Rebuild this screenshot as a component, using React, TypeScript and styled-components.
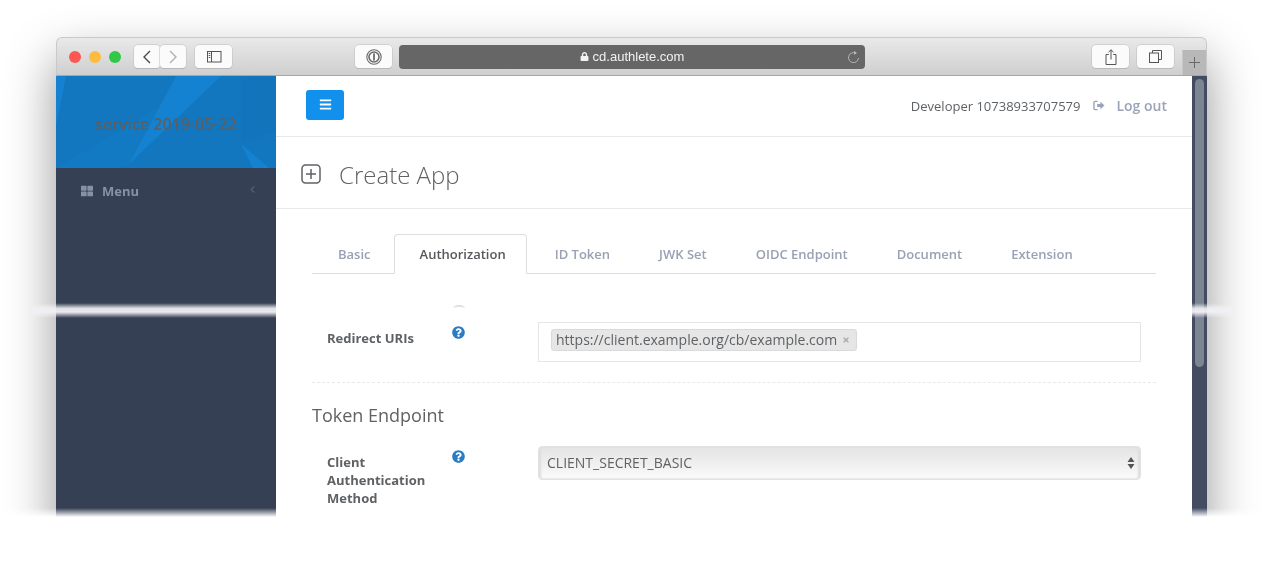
import React from "react";
import styled, { createGlobalStyle } from "styled-components";
import { FaBars, FaQuestionCircle, FaThLarge, FaTimes, FaLock } from "react-icons/fa";
import { ChevronLeft } from "lucide-react";

const GlobalStyle = createGlobalStyle`
  html, body {
    margin: 0;
    padding: 0;
    background: #ffffff;
    overflow: hidden;
  }
  * {
    box-sizing: border-box;
  }
`;

const TABS = ["Basic", "Authorization", "ID Token", "JWK Set", "OIDC Endpoint", "Document", "Extension"];

function BackIcon() {
  return (
    <svg width="10" height="14" viewBox="0 0 10 14" fill="none" stroke="#4a4a4a" strokeWidth="1.4">
      <path d="M8 1L2 7l6 6" />
    </svg>
  );
}

function ForwardIcon() {
  return (
    <svg width="10" height="14" viewBox="0 0 10 14" fill="none" stroke="#b0b0b0" strokeWidth="1.4">
      <path d="M2 1l6 6-6 6" />
    </svg>
  );
}

function SidebarIcon() {
  return (
    <svg width="16" height="12" viewBox="0 0 16 12" fill="none" stroke="#555" strokeWidth="1">
      <rect x="1.5" y="0.5" width="13.5" height="10.5" />
      <path d="M5.5 0.5v10.5" />
      <path d="M2.7 2.5h1.6M2.7 4.5h1.6M2.7 6.5h1.6" />
    </svg>
  );
}

function PasswordIcon() {
  return (
    <svg width="16" height="16" viewBox="0 0 16 16" fill="none">
      <circle cx="8" cy="8" r="7.2" stroke="#6a6a6a" strokeWidth="1.1" />
      <circle cx="8" cy="8" r="5" stroke="#6a6a6a" strokeWidth="1.6" />
      <rect x="7.2" y="4.4" width="1.6" height="7.2" fill="#5a5a5a" />
    </svg>
  );
}

function ReloadIcon() {
  return (
    <svg width="13" height="14" viewBox="0 0 13 14" fill="none" stroke="#b5b5b5" strokeWidth="1">
      <path d="M8.6 3.1A5 5 0 1 0 11.5 8" />
      <path d="M7 0.7l3 2.2-3 2.2z" fill="#b5b5b5" stroke="none" />
    </svg>
  );
}

function ShareIcon() {
  return (
    <svg width="12" height="16" viewBox="0 0 12 16" fill="none" stroke="#555" strokeWidth="1">
      <path d="M3.8 5.5H1v10h10v-10H8.2" />
      <path d="M6 10.5V0.8M3.5 3.2L6 0.8l2.500 2.400" />
    </svg>
  );
}

function TabsIcon() {
  return (
    <svg width="13" height="13" viewBox="0 0 13 13" fill="none" stroke="#555" strokeWidth="1">
      <rect x="0.5" y="3" width="9" height="9.5" />
      <path d="M3.5 3V0.5h9v9H9.5" />
    </svg>
  );
}

function PlusIcon() {
  return (
    <svg width="11" height="11" viewBox="0 0 11 11" fill="none" stroke="#6a6a6a" strokeWidth="1">
      <path d="M5.500 0v11M0 5.500h11" />
    </svg>
  );
}

function LogoutIcon() {
  return (
    <svg width="12" height="11" viewBox="0 0 13 11">
      <path d="M5 1H2.200C1.400 1 1 1.500 1 2.200v6.600C1 9.500 1.400 10 2.200 10H5" fill="none" stroke="#9aa3b8" strokeWidth="1.500" />
      <path d="M4.500 3.800h3.500V1.500l4.500 4-4.500 4V7.200H4.500z" fill="#9aa3b8" />
    </svg>
  );
}

function PlusSquareIcon() {
  return (
    <svg width="20" height="20" viewBox="0 0 20 20" fill="none" stroke="#5f6265" strokeWidth="1.500">
      <rect x="1" y="1" width="18" height="18" rx="3.500" />
      <path d="M10 5v10M5 10h10" />
    </svg>
  );
}

function HeaderArt() {
  return (
    <HeaderArtSvg viewBox="0 0 220 92" preserveAspectRatio="none">
      <polygon points="0,92 105,30 165,0 73,88 62,92" fill="#127ac2" />
      <polygon points="120,0 165,0 73,88" fill="#1482d0" />
      <polygon points="0,0 10,0 0,50" fill="#1482d0" />
      <polygon points="185,68 213,92 197,92" fill="#1482d0" />
      <polygon points="185,0 220,0 220,55 185,68" fill="#1275bb" />
    </HeaderArtSvg>
  );
}

export default function App() {
  return (
    <Page>
      <GlobalStyle />
      <BrowserWindow>
        <TitleBar>
          <Lights>
            <Light $color="#fc5753" />
            <Light $color="#fdbc40" />
            <Light $color="#33c748" />
          </Lights>
          <NavGroup>
            <NavButton><BackIcon /></NavButton>
            <NavButton><ForwardIcon /></NavButton>
          </NavGroup>
          <ToolButton $gap={9}><SidebarIcon /></ToolButton>
          <ToolButton $gap={123}><PasswordIcon /></ToolButton>
          <UrlBar>
            <UrlText><FaLock size={9} />cd.authlete.com</UrlText>
            <ReloadSlot><ReloadIcon /></ReloadSlot>
          </UrlBar>
          <ToolButton $gap={227}><ShareIcon /></ToolButton>
          <ToolButton $gap={8}><TabsIcon /></ToolButton>
          <NewTab><PlusIcon /></NewTab>
        </TitleBar>
        <Body>
          <Sidebar>
            <SidebarHeader>
              <HeaderArt />
              <ServiceName>service 2019-05-22</ServiceName>
            </SidebarHeader>
            <MenuItem>
              <FaThLarge size={12} />
              <MenuLabel>Menu</MenuLabel>
              <MenuCaret><ChevronLeft size={11} strokeWidth={1.5} /></MenuCaret>
            </MenuItem>
          </Sidebar>
          <Main>
            <TopBar>
              <MenuButton><FaBars size={13} /></MenuButton>
              <UserName>Developer 10738933707579</UserName>
              <LogoutLink><LogoutIcon />Log out</LogoutLink>
            </TopBar>
            <PageHeading>
              <PlusSquareIcon />
              <PageTitle>Create App</PageTitle>
            </PageHeading>
            <Content>
              <TabList>
                {TABS.map((tab) => (
                  <Tab key={tab} $active={tab === "Authorization"}>{tab}</Tab>
                ))}
              </TabList>
              <Spinner />
              <FormRow $top={11}>
                <FieldLabel>Redirect URIs</FieldLabel>
                <HelpSlot><FaQuestionCircle size={13} /></HelpSlot>
                <TagInput>
                  <TagChip>
                    https://client.example.org/cb/example.com
                    <TagRemove><FaTimes size={8} /></TagRemove>
                  </TagChip>
                </TagInput>
              </FormRow>
              <DashedRule />
              <SectionTitle>Token Endpoint</SectionTitle>
              <FormRow $top={19}>
                <FieldLabel>Client Authentication Method</FieldLabel>
                <HelpSlot><FaQuestionCircle size={13} /></HelpSlot>
                <SelectBox>
                  CLIENT_SECRET_BASIC
                  <SelectArrows>
                    <svg width="8" height="14" viewBox="0 0 8 14" fill="#555">
                      <path d="M4 1l3.500 5H.5zM4 13L.5 8h7z" />
                    </svg>
                  </SelectArrows>
                </SelectBox>
              </FormRow>
            </Content>
          </Main>
          <ScrollTrack>
            <ScrollThumb />
          </ScrollTrack>
        </Body>
      </BrowserWindow>
      <TornStrip />
      <BottomFade />
    </Page>
  );
}

const Page = styled.div`
  position: relative;
  width: 1263px;
  height: 571px;
  padding: 37px 56px 0;
  overflow: hidden;
  background: #ffffff;
  font-family: "Open Sans", "Liberation Sans", sans-serif;
  color: #676a6c;
`;

const BrowserWindow = styled.div`
  display: flex;
  flex-direction: column;
  width: 1151px;
  height: 500px;
  border-radius: 6px 6px 0 0;
  box-shadow: 0 22px 50px rgba(0, 0, 0, 0.42);
`;

const TitleBar = styled.div`
  display: flex;
  align-items: center;
  height: 39px;
  flex: none;
  padding-left: 12px;
  background: linear-gradient(#e9e9e9, #cfcfcf);
  border: 1px solid #c9c9c9;
  border-bottom: 1px solid #a6a6a6;
  border-radius: 6px 6px 0 0;
`;

const Lights = styled.div`
  display: flex;
  gap: 8px;
  margin-right: 13px;
`;

const Light = styled.span<{ $color: string }>`
  width: 12px;
  height: 12px;
  border-radius: 50%;
  background: ${(p) => p.$color};
`;

const NavGroup = styled.div`
  display: flex;
`;

const NavButton = styled.div`
  display: flex;
  align-items: center;
  justify-content: center;
  width: 26px;
  height: 23px;
  background: #fbfbfb;
  border-radius: 4px;
  box-shadow: 0 0 0 0.5px #bdbdbd, 0 1px 0 #b5b5b5;
`;

const ToolButton = styled.div<{ $gap: number }>`
  display: flex;
  align-items: center;
  justify-content: center;
  width: 37px;
  height: 23px;
  margin-left: ${(p) => p.$gap}px;
  background: #fbfbfb;
  border-radius: 4px;
  box-shadow: 0 0 0 0.5px #bdbdbd, 0 1px 0 #b5b5b5;
`;

const UrlBar = styled.div`
  position: relative;
  display: flex;
  align-items: center;
  justify-content: center;
  width: 466px;
  height: 24px;
  margin-left: 7px;
  background: #666666;
  border-radius: 4px;
`;

const UrlText = styled.span`
  display: flex;
  align-items: center;
  gap: 4px;
  font-family: "Liberation Sans", Arial, sans-serif;
  font-size: 13px;
  color: #f2f2f2;
`;

const ReloadSlot = styled.span`
  position: absolute;
  right: 5px;
  top: 5px;
  display: flex;
`;

const NewTab = styled.div`
  display: flex;
  align-items: center;
  justify-content: center;
  align-self: flex-end;
  width: 24px;
  height: 25px;
  margin-left: 8px;
  background: #b8b8b8;
  border-left: 1px solid #c8c8c8;
`;

const Body = styled.div`
  display: flex;
  flex: 1;
  min-height: 0;
`;

const Sidebar = styled.aside`
  width: 220px;
  flex: none;
  background: #364054;
`;

const SidebarHeader = styled.div`
  position: relative;
  display: flex;
  align-items: center;
  justify-content: center;
  height: 92px;
  padding-top: 4px;
  background: #1277be;
`;

const HeaderArtSvg = styled.svg`
  position: absolute;
  inset: 0;
  width: 100%;
  height: 100%;
`;

const ServiceName = styled.span`
  position: relative;
  font-size: 16px;
  font-weight: 600;
  color: #5c5f63;
`;

const MenuItem = styled.div`
  display: flex;
  align-items: center;
  height: 46px;
  padding: 0 18px 0 25px;
  color: #8790a6;
`;

const MenuLabel = styled.span`
  margin-left: 9px;
  font-size: 13px;
  font-weight: 700;
`;

const MenuCaret = styled.span`
  display: flex;
  margin-left: auto;
  margin-top: -4px;
`;

const Main = styled.main`
  flex: 1;
  min-width: 0;
  background: #ffffff;
`;

const TopBar = styled.div`
  display: flex;
  align-items: center;
  height: 61px;
  padding: 0 25px 1px 30px;
  border-bottom: 1px solid #e7eaec;
`;

const MenuButton = styled.div`
  display: flex;
  align-items: center;
  justify-content: center;
  width: 38px;
  height: 30px;
  margin-right: auto;
  margin-bottom: 2px;
  background: #1290ee;
  border-radius: 3px;
  color: #ffffff;
`;

const UserName = styled.span`
  padding-top: 1px;
  font-size: 13px;
  color: #5f6265;
`;

const LogoutLink = styled.span`
  display: flex;
  align-items: center;
  gap: 11px;
  margin-left: 13px;
  font-size: 14px;
  font-weight: 600;
  color: #9aa3b8;
`;

const PageHeading = styled.div`
  display: flex;
  align-items: center;
  gap: 18px;
  height: 72px;
  padding: 3px 0 0 25px;
  border-bottom: 1px solid #e7eaec;
`;

const PageTitle = styled.h1`
  margin: 0;
  font-size: 24px;
  font-weight: 300;
  color: #5f6265;
`;

const Content = styled.div`
  padding: 25px 36px 0;
`;

const TabList = styled.div`
  display: flex;
  gap: 2px;
  height: 40px;
  border-bottom: 1px solid #dddddd;
`;

const Tab = styled.div<{ $active?: boolean }>`
  display: flex;
  align-items: center;
  height: 40px;
  padding: 0 20px 0 25px;
  border: 1px solid ${(p) => (p.$active ? "#dddddd" : "transparent")};
  border-bottom: 1px solid ${(p) => (p.$active ? "#ffffff" : "transparent")};
  border-radius: 4px 4px 0 0;
  background: ${(p) => (p.$active ? "#ffffff" : "transparent")};
  font-size: 13px;
  font-weight: 600;
  color: ${(p) => (p.$active ? "#55585c" : "#9aa1b3")};
`;

const Spinner = styled.div`
  width: 12px;
  height: 6px;
  margin: 31px 0 0 141px;
  border-top: 2px solid #c3ced6;
  border-radius: 50%;
`;

const FormRow = styled.div<{ $top: number }>`
  display: grid;
  grid-template-columns: 125px 86px 1fr;
  padding: 0 15px;
  margin-top: ${(p) => p.$top}px;
`;

const FieldLabel = styled.div`
  width: 105px;
  padding-top: 7px;
  font-size: 13px;
  font-weight: 700;
  line-height: 18px;
  color: #5f6265;
`;

const HelpSlot = styled.div`
  color: #2b7cc3;
`;

const TagInput = styled.div`
  height: 40px;
  padding: 5px 12px;
  border: 1px solid #e5e6e7;
`;

const TagChip = styled.span`
  display: inline-flex;
  align-items: center;
  height: 22px;
  padding: 0 6px 1px 4px;
  background: #e6e6e6;
  border: 1px solid #dadada;
  border-radius: 3px;
  font-size: 14px;
  color: #5f6265;
`;

const TagRemove = styled.span`
  display: flex;
  margin-left: 5px;
  color: #aaaaaa;
`;

const DashedRule = styled.div`
  margin-top: 20px;
  border-top: 1px dashed #e7eaec;
`;

const SectionTitle = styled.h3`
  margin: 20px 0 0;
  font-size: 18px;
  font-weight: 400;
  line-height: 24px;
  color: #5f6265;
`;

const SelectBox = styled.div`
  position: relative;
  display: flex;
  align-items: center;
  height: 34px;
  padding: 0 0 2px 8px;
  background: linear-gradient(#e4e4e4, #f1f1f1 60%, #fbfbfb);
  border: 1px solid #e2e2e2;
  border-radius: 4px;
  box-shadow: inset 2px 0 2px #dedede, inset -2px 0 2px #dedede;
  font-size: 14px;
  color: #5f6265;
`;

const SelectArrows = styled.span`
  position: absolute;
  right: 5px;
  top: 9px;
  display: flex;
`;

const ScrollTrack = styled.div`
  width: 15px;
  flex: none;
  padding: 3px 3px 0 3px;
  background: #434c60;
`;

const ScrollThumb = styled.div`
  width: 9px;
  height: 288px;
  background: #7d8494;
  border-radius: 5px;
`;

const TornStrip = styled.div`
  position: absolute;
  left: 0;
  right: 0;
  top: 303px;
  height: 15px;
  mix-blend-mode: lighten;
  background: linear-gradient(
    rgba(240, 240, 244, 0),
    rgba(240, 240, 244, 0.9) 35%,
    rgba(240, 240, 244, 0.98) 60%,
    rgba(240, 240, 244, 0)
  );
`;

const BottomFade = styled.div`
  position: absolute;
  left: 0;
  right: 0;
  top: 508px;
  bottom: 0;
  background: linear-gradient(rgba(255, 255, 255, 0), #ffffff 9px);
`;
